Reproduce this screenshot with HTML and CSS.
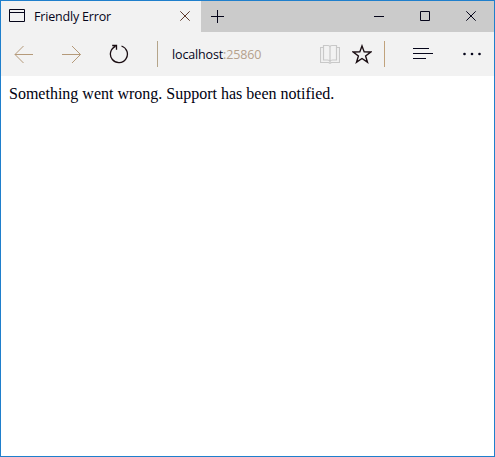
FILE: index.html
```html
<!DOCTYPE html>
<html lang="en">
<head>
<meta charset="utf-8">
<title>Friendly Error</title>
<link rel="stylesheet" href="styles.css">
</head>
<body>
<div class="window">
  <header class="titlebar">
    <div class="tab">
      <svg class="page-icon" width="16" height="13" viewBox="0 0 16 13"><path d="M.5.5h15v12H.5zM1 3.5h14"/></svg>
      <span class="tab-title">Friendly Error</span>
      <svg class="tab-close" width="10" height="10" viewBox="0 0 10 10"><path d="M.3.3l9.4 9.4M9.7.3L.3 9.7"/></svg>
    </div>
    <svg class="new-tab" width="13" height="13" viewBox="0 0 13 13"><path d="M6.5 0v13M0 6.5h13"/></svg>
    <div class="controls">
      <svg width="10" height="10" viewBox="0 0 10 10"><path d="M0 5.5h10"/></svg>
      <svg width="10" height="10" viewBox="0 0 10 10"><path d="M.5.5h9v9h-9z"/></svg>
      <svg width="10" height="10" viewBox="0 0 10 10"><path d="M.3.3l9.4 9.4M9.7.3L.3 9.7"/></svg>
    </div>
  </header>
  <nav class="toolbar">
    <svg class="back" width="20" height="20" viewBox="0 0 20 20"><path d="M19 10.5H1M9.5 2L1 10.5 9.5 19"/></svg>
    <svg class="forward" width="20" height="20" viewBox="0 0 20 20"><path d="M0 10.5h18.5M10 2l8.5 8.5L10 19"/></svg>
    <svg class="refresh" width="20" height="20" viewBox="0 0 20 20"><path d="M12.5 2A8.500 8.500 0 1 1 6.500 2.300M3.200 1.500h4.300v4.200"/></svg>
    <span class="divider"></span>
    <div class="address">localhost<span class="port">:25860</span></div>
    <svg class="book" width="20" height="20" viewBox="0 0 20 20"><path d="M3.500 1.500h4.500Q10 1.500 10 3.500 10 1.500 12 1.500h4.500v14.500h-4Q10.500 16 10 17.500 9.500 16 7.500 16h-4zM10 3v14.500M3.500 3.500h-3v15h8l1.500.8 1.500-.8h8v-15h-3"/></svg>
    <svg class="star" width="20" height="20" viewBox="0 0 20 20"><path d="M10 1.900l2.200 6 6.500.1-5.100 3.900 1.900 6.300L10 14.500l-5.500 3.700 1.900-6.300L1.300 8l6.500-.1z"/></svg>
    <span class="divider star-divider"></span>
    <svg class="hub" width="20" height="11" viewBox="0 0 20 11"><path d="M0 .5h16M0 5.500h20M0 10.500h13"/></svg>
    <svg class="more" width="18" height="4" viewBox="0 0 18 4"><circle cx="1.500" cy="2" r="1.300"/><circle cx="9" cy="2" r="1.300"/><circle cx="16.500" cy="2" r="1.300"/></svg>
  </nav>
  <main class="content">Something went wrong. Support has been notified.</main>
</div>
</body>
</html>
```
FILE: styles.css
```css
* { box-sizing: border-box; }
body { margin: 0; }
svg { display: block; flex: none; fill: none; stroke: #05051a; stroke-width: 1; }
.window {
  display: flex;
  flex-direction: column;
  width: 495px;
  height: 457px;
  border: 1px solid #1f7fcc;
  background: #fff;
  overflow: hidden;
}
.titlebar { display: flex; height: 31px; background: #cbcbcb; }
.tab {
  display: flex;
  width: 200px;
  padding-left: 8px;
  background: #f2f2f2;
  font: 12.5px/32px "Open Sans", "Noto Sans", sans-serif;
  color: #05051a;
}
.page-icon { margin-top: 8px; }
.tab-title { width: 146px; margin-left: 9px; letter-spacing: -0.18px; white-space: nowrap; }
.tab-close { margin-top: 10px; stroke: #5e3a2b; }
.new-tab { margin: 9px 0 0 10px; }
.controls { display: flex; gap: 36px; margin: 10px 18px 0 auto; }
.toolbar {
  display: flex;
  align-items: flex-start;
  height: 44px;
  padding: 12px 12px 0 13px;
  background: #f2f2f2;
}
.back, .forward { stroke: #b59a7a; }
.forward { margin-left: 28px; }
.refresh { margin-left: 27px; stroke: #1a0d12; stroke-width: 1.3; }
.divider { width: 1px; height: 26px; margin: -3px 0 0 28px; background: #b5a58a; }
.address {
  width: 148px;
  margin-left: 14px;
  font: 12.5px/22px "Open Sans", "Noto Sans", sans-serif;
  letter-spacing: -0.15px;
  color: #05051a;
  white-space: nowrap;
}
.port { color: #b5a18c; }
.book { stroke: #c8c8c8; stroke-width: 1.2; }
.star { margin-left: 12px; stroke: #1a0d12; stroke-width: 1.4; }
.star-divider { margin-left: 12px; background: #c0a27c; }
.hub { margin: 4px 0 0 28px; }
.more { margin: 8px 0 0 30px; fill: #05051a; stroke: none; }
.content {
  flex: 1;
  padding: 9px 8px;
  font: 16px/18px "Liberation Serif", serif;
  color: #000010;
}
```
